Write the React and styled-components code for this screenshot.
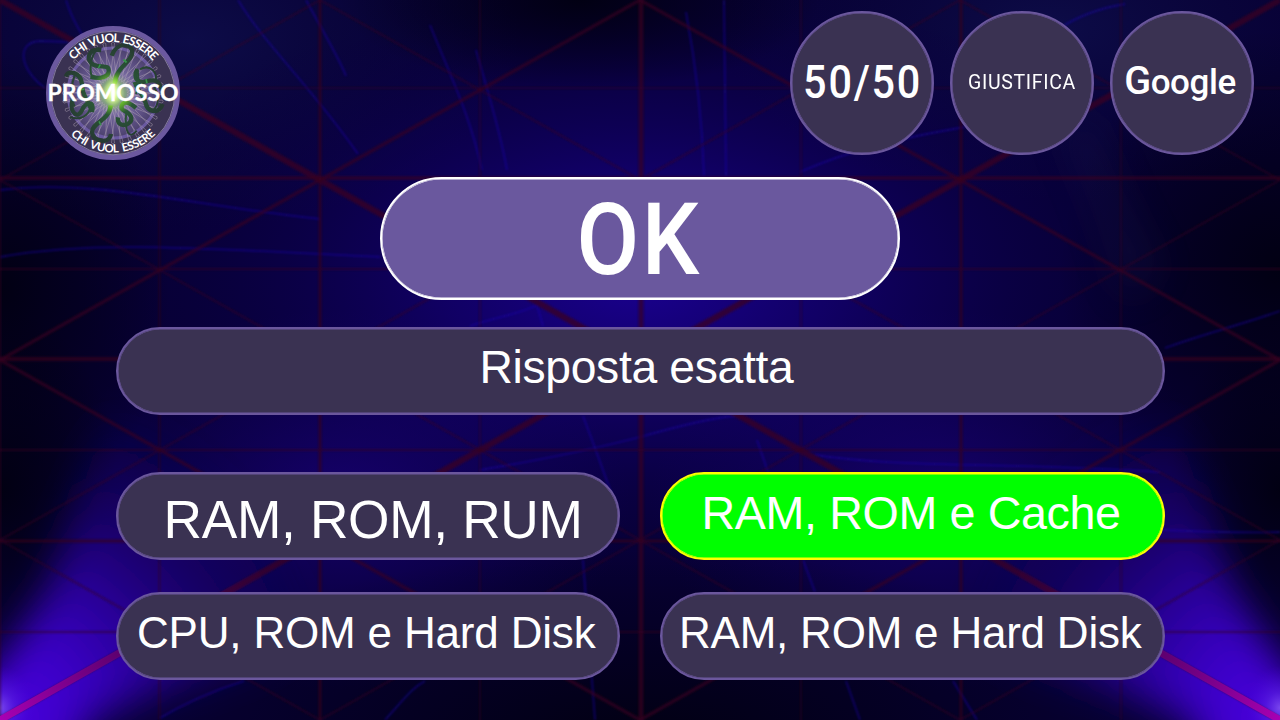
import React from "react";
import styled, { createGlobalStyle } from "styled-components";

const GlobalStyle = createGlobalStyle`
  * { box-sizing: border-box; }
  html, body { margin: 0; background: #03001c; }
  body { overflow: hidden; }
`;

const Stage = styled.main`
  position: relative;
  width: 1280px;
  height: 720px;
  overflow: hidden;
  font-family: "Liberation Sans", Arial, sans-serif;
  color: #fff;
`;

const Backdrop = styled.svg`
  position: absolute;
  inset: 0;
  display: block;
`;

const Screen = styled.div`
  position: relative;
  height: 100%;
  display: flex;
  flex-direction: column;
  align-items: center;
`;

const Header = styled.header`
  width: 100%;
  height: 176.5px;
  display: flex;
  justify-content: space-between;
  align-items: flex-start;
  padding: 10.5px 26px 0 45px;
`;

const Logo = styled.svg`
  display: block;
  margin-top: 14px;
`;

const Lifelines = styled.nav`
  display: flex;
  gap: 16px;
`;

const Lifeline = styled.button`
  width: 144px;
  height: 144px;
  padding: 0;
  border: 2px solid #6b579d;
  box-shadow: inset 0 0 0 0.5px #6b579d;
  border-radius: 50%;
  background: #3a3252;
  color: #fff;
  display: flex;
  align-items: center;
  justify-content: center;
`;

const LifelineLabel = styled.span`
  flex: none;
  font-family: Roboto, sans-serif;
  font-size: ${(p) => p.$size}px;
  font-weight: ${(p) => p.$weight || 400};
  letter-spacing: ${(p) => p.$spacing || 0}px;
  line-height: 1;
  white-space: nowrap;
  transform: translate(${(p) => p.$nudge || 0}px, ${(p) => p.$shift || 0}px) scaleX(${(p) => p.$stretch || 1});
`;

const Wordmark = styled(LifelineLabel)`
  &::first-letter { font-size: 39.5px; }
  display: block;
`;

const Confirm = styled.button`
  width: 520px;
  height: 123px;
  padding: 0;
  border: 2px solid #fff;
  box-shadow: inset 0 0 0 0.5px #fff;
  border-radius: 62px;
  background: #6a589e;
  color: #fff;
  display: flex;
  align-items: center;
  justify-content: center;
`;

const Pill = styled.div`
  width: ${(p) => p.$width}px;
  height: 88px;
  border: 2px solid ${(p) => (p.$correct ? "#ffff00" : "#6b579d")};
  box-shadow: inset 0 0 0 0.5px ${(p) => (p.$correct ? "#ffff00" : "#6b579d")};
  border-radius: 44px;
  background: ${(p) => (p.$correct ? "#00ff00" : "#3a3252")};
  padding: ${(p) => p.$top}px 0 0 ${(p) => p.$left}px;
  font-size: ${(p) => p.$size}px;
  letter-spacing: ${(p) => p.$spacing}px;
  line-height: 1;
  white-space: nowrap;
`;

const Message = styled(Pill)`
  margin-top: 27.5px;
`;

const Answers = styled.section`
  margin-top: 57px;
  display: grid;
  grid-template-columns: 504.5px 504.5px;
  gap: 32px 40px;
`;

const verticals = [
  [0, 2], [159.5, 1.5], [320, 3], [480, 1.5], [641, 5],
  [801, 1.5], [961, 3], [1121, 1.5],
];
const horizontals = [
  [88, 1.5], [178, 3.5], [269, 1.8], [359, 4], [450, 1.8], [541, 3], [632, 1.8],
];
const diagonals = [
  [0, 0, 1280, 720, 6], [1280, 0, 0, 720, 6],
  [640, 0, 0, 360, 3.4], [640, 0, 1280, 360, 3.4],
  [0, 360, 640, 720, 3.4], [1280, 360, 640, 720, 3.4],
  [320, 0, 0, 180, 1.8], [320, 0, 1280, 540, 1.8],
  [960, 0, 0, 540, 1.8], [960, 0, 1280, 180, 1.8],
  [0, 180, 960, 720, 1.8], [1280, 180, 320, 720, 1.8],
  [0, 540, 320, 720, 1.8], [1280, 540, 960, 720, 1.8],
];
const strands = [
  "M66 0 C72 20 82 35 95 55",
  "M45 88 C20 70 15 42 40 41 L70 42",
  "M238 0 C265 45 310 85 358 154",
  "M306 0 C325 35 340 60 346 76",
  "M430 25 C450 75 470 115 482 170",
  "M476 50 C490 100 500 130 507 170",
  "M0 190 C90 178 190 205 320 219",
  "M0 257 C90 240 200 248 380 257",
  "M686 12 C695 60 702 110 704 176",
  "M724 0 L726 176",
  "M800 172 C850 150 900 138 965 127",
  "M1060 28 C1080 15 1100 8 1125 4",
  "M470 326 C500 316 520 314 537 305 L543 326",
  "M1165 348 C1200 335 1240 325 1280 311",
  "M583 416 C596 450 605 475 617 510",
  "M480 470 C540 460 590 450 640 437 C675 427 710 418 735 416",
  "M757 440 L768 472",
  "M815 455 C900 468 1000 462 1160 472",
  "M1164 530 C1210 532 1240 533 1280 532",
  "M803 560 L815 592",
  "M160 718 C190 700 215 690 244 681",
  "M385 720 C405 698 412 688 425 681",
  "M846 681 L860 720",
  "M953 681 L977 720",
  "M583 560 L595 720",
];

const lineOpacity = (w) => (w > 5 ? 0.75 : w > 2 ? 0.66 : 0.56);

function Lights() {
  return (
    <Backdrop width="1280" height="720" viewBox="0 0 1280 720" aria-hidden="true">
      <defs>
        <radialGradient id="core">
          <stop offset="0" stopColor="#1a0090" />
          <stop offset=".35" stopColor="#130070" stopOpacity=".8" />
          <stop offset="1" stopColor="#08003c" stopOpacity="0" />
        </radialGradient>
        <radialGradient id="mist">
          <stop offset="0" stopColor="#0d0c48" />
          <stop offset="1" stopColor="#0a063c" stopOpacity="0" />
        </radialGradient>
        <radialGradient id="indigo">
          <stop offset="0" stopColor="#200092" stopOpacity=".9" />
          <stop offset="1" stopColor="#150070" stopOpacity="0" />
        </radialGradient>
        <radialGradient id="shade">
          <stop offset="0" stopColor="#01000f" stopOpacity=".9" />
          <stop offset="1" stopColor="#01000f" stopOpacity="0" />
        </radialGradient>
        <radialGradient id="beam" gradientUnits="userSpaceOnUse" cx="0" cy="720" r="360">
          <stop offset="0" stopColor="#4c04e0" />
          <stop offset=".22" stopColor="#3c00c8" />
          <stop offset=".42" stopColor="#2a009c" />
          <stop offset=".62" stopColor="#1e007a" stopOpacity=".75" />
          <stop offset=".92" stopColor="#140068" stopOpacity="0" />
        </radialGradient>
        <radialGradient id="spark">
          <stop offset="0" stopColor="#7a48ee" />
          <stop offset=".4" stopColor="#5a20e4" stopOpacity=".6" />
          <stop offset="1" stopColor="#4400d8" stopOpacity="0" />
        </radialGradient>
        <radialGradient id="hot" gradientUnits="userSpaceOnUse" cx="0" cy="720" r="330">
          <stop offset="0" stopColor="#a800b4" />
          <stop offset=".4" stopColor="#680078" stopOpacity=".85" />
          <stop offset="1" stopColor="#40003c" stopOpacity="0" />
        </radialGradient>
        <filter id="soft" x="-30%" y="-30%" width="160%" height="160%">
          <feGaussianBlur stdDeviation="19" />
        </filter>
        <filter id="haze" filterUnits="userSpaceOnUse" x="0" y="0" width="1280" height="720">
          <feGaussianBlur stdDeviation=".8" />
        </filter>
        <g id="corner">
          <polygon points="-50,780 -30,700 10,650 50,585 75,515 110,400 300,340 420,600 250,665 150,694 90,720 60,780" fill="url(#beam)" filter="url(#soft)" />
          <ellipse cx="0" cy="708" rx="36" ry="42" fill="url(#spark)" />
        </g>
        <path id="ray" d="M0 720 L320 540" stroke="url(#hot)" strokeWidth="7" />
      </defs>
      <rect width="1280" height="720" fill="#070034" />
      <ellipse cx="190" cy="40" rx="330" ry="190" fill="url(#mist)" />
      <ellipse cx="1050" cy="30" rx="330" ry="170" fill="url(#mist)" />
      <ellipse cx="640" cy="280" rx="560" ry="320" fill="url(#core)" />
      <ellipse cx="340" cy="500" rx="290" ry="190" fill="url(#indigo)" opacity=".65" />
      <ellipse cx="940" cy="500" rx="290" ry="190" fill="url(#indigo)" opacity=".65" />
      <ellipse cx="0" cy="290" rx="170" ry="240" fill="url(#shade)" />
      <ellipse cx="1280" cy="270" rx="220" ry="240" fill="url(#shade)" />
      <ellipse cx="0" cy="490" rx="120" ry="180" fill="url(#shade)" />
      <ellipse cx="1280" cy="490" rx="110" ry="170" fill="url(#shade)" />
      <ellipse cx="580" cy="0" rx="240" ry="90" fill="url(#shade)" />
      <ellipse cx="640" cy="740" rx="520" ry="190" fill="url(#shade)" />
      <use href="#corner" />
      <use href="#corner" transform="translate(1280 0) scale(-1 1)" />
      <path d="M1060 125 C1090 190 1110 240 1125 300 L1160 270 C1130 220 1105 160 1085 115Z" fill="#222058" opacity=".25" filter="url(#soft)" />
      <g fill="none" stroke="#1c08b4" strokeWidth="1.8" opacity=".45" filter="url(#haze)">
        {strands.map((d) => <path key={d} d={d} />)}
      </g>
      <g stroke="#380020" filter="url(#haze)">
        {verticals.map(([x, w]) => (
          <path key={x} d={`M${x} -4 V724`} strokeWidth={w} strokeOpacity={lineOpacity(w)} />
        ))}
        {horizontals.map(([y, w]) => (
          <path key={y} d={`M-4 ${y} H1284`} strokeWidth={w} strokeOpacity={lineOpacity(w)} />
        ))}
        {diagonals.map(([a, b, c, d, w]) => (
          <path key={`${a}-${b}-${c}-${d}`} d={`M${a} ${b} L${c} ${d}`} strokeWidth={w} strokeOpacity={lineOpacity(w)} />
        ))}
      </g>
      <use href="#ray" />
      <use href="#ray" transform="translate(1280 0) scale(-1 1)" />
    </Backdrop>
  );
}

const snakes = [
  "M245 137 C262 92 312 98 306 132 C300 158 258 172 254 222",
  "M214 120 C176 114 164 148 190 164 C214 175 238 160 236 186 C232 206 200 206 182 200",
  "M108 200 C112 178 152 186 156 222 C154 258 176 268 186 306",
  "M128 268 C116 312 146 328 156 300 C166 276 196 270 186 306",
  "M243 372 C238 404 188 396 186 366 C186 338 240 330 242 286",
  "M264 322 C258 356 304 348 304 326 C304 302 262 306 278 282 C288 272 306 284 318 294",
  "M398 282 C386 314 352 308 346 276 C336 246 322 244 314 216",
  "M322 178 C306 206 328 222 348 214 C382 206 386 214 394 238",
];
const bars = [
  "M206 112 C178 140 178 180 186 206",
  "M120 322 C150 330 175 322 184 286",
  "M320 362 C300 390 280 370 290 300",
  "M330 178 C360 160 385 190 376 214",
  "M322 176 C330 220 322 238 318 252",
  "M136 190 C124 220 120 260 134 290",
  "M370 300 C388 284 388 254 372 232",
];

function spirograph(inner, outer, teeth, twist) {
  let d = "";
  for (let i = 0; i < teeth; i += 1) {
    const a = (i / teeth) * Math.PI * 2;
    const half = Math.PI / teeth;
    const at = (r, t) => `${(68 + r * Math.cos(t)).toFixed(2)} ${(68 + r * Math.sin(t)).toFixed(2)}`;
    d += `M${at(inner, a + twist)} L${at(outer, a - 0.03)} Q${at(outer + 2, a)} ${at(outer, a + 0.03)} L${at(inner, a + half - twist)} `;
  }
  return d;
}

function Emblem() {
  return (
    <Logo width="136" height="136" viewBox="0 0 136 136">
      <defs>
        <radialGradient id="disc">
          <stop offset="0" stopColor="#ffffff" />
          <stop offset=".1" stopColor="#d8f59a" />
          <stop offset=".26" stopColor="#86a481" />
          <stop offset=".45" stopColor="#786ba0" />
          <stop offset=".8" stopColor="#5a4d80" />
          <stop offset="1" stopColor="#4a406c" />
        </radialGradient>
        <radialGradient id="serpent" gradientUnits="userSpaceOnUse" cx="249" cy="249" r="150">
          <stop offset="0" stopColor="#c8ff50" />
          <stop offset=".25" stopColor="#6cc02c" />
          <stop offset=".45" stopColor="#2a5636" />
          <stop offset="1" stopColor="#263a32" />
        </radialGradient>
        <radialGradient id="flare">
          <stop offset="0" stopColor="#fff" />
          <stop offset=".35" stopColor="#e6ffae" stopOpacity=".7" />
          <stop offset="1" stopColor="#a5ee3c" stopOpacity="0" />
        </radialGradient>
        <path id="topArc" d="M17 68 A51 51 0 0 1 119 68" />
        <path id="bottomArc" d="M8.5 68 A59.5 59.5 0 0 0 127.5 68" />
      </defs>
      <circle cx="68" cy="68" r="64.5" fill="#3a3252" stroke="#6b589f" strokeWidth="5" />
      <circle cx="68" cy="68" r="61.8" fill="none" stroke="#9389ac" strokeWidth=".8" />
      <circle cx="68" cy="68" r="45" fill="url(#disc)" stroke="#6a59a0" strokeWidth="3" />
      <path d={spirograph(14, 50, 36, 0.3)} fill="none" stroke="#b9adbc" strokeWidth=".6" opacity=".7" />
      <g transform="translate(68 68) scale(.33333) translate(-249 -249)" fill="none" stroke="url(#serpent)">
        {snakes.map((d) => <path key={d} d={d} strokeWidth="13" />)}
        {bars.map((d) => <path key={d} d={d} strokeWidth="6" />)}
        <g stroke="#38924a" strokeWidth="13">
          <path d="M283 155 L287 151" />
          <path d="M206 168 L210 170" />
          <path d="M156 236 L157 241" />
          <path d="M208 341 L212 339" />
          <path d="M340 253 L342 257" />
          <path d="M347 214 L352 213" />
        </g>
      </g>
      <ellipse cx="68" cy="67" rx="9" ry="18" fill="url(#flare)" />
      <g fill="#fff" fontFamily="Lato, sans-serif" fontWeight="700">
        <text fontSize="12" wordSpacing="2">
          <textPath href="#topArc" startOffset="35.5" textLength="90" lengthAdjust="spacing">CHI VUOL ESSERE</textPath>
        </text>
        <text fontSize="11.4" wordSpacing="2">
          <textPath href="#bottomArc" startOffset="46" textLength="95" lengthAdjust="spacing">CHI VUOL ESSERE</textPath>
        </text>
        <text x="2.5" y="76" fontSize="22.4" stroke="#fff" strokeWidth=".3" textLength="131" lengthAdjust="spacingAndGlyphs">PROMOSSO</text>
      </g>
    </Logo>
  );
}

const answers = [
  { text: "RAM, ROM, RUM", size: 53.33, top: 19, left: 46, spacing: -0.35 },
  { text: "RAM, ROM e Cache", size: 46.67, top: 16, left: 39.5, spacing: -0.38 },
  { text: "CPU, ROM e Hard Disk", size: 44, top: 17, left: 19.5, spacing: -0.18 },
  { text: "RAM, ROM e Hard Disk", size: 44, top: 17, left: 17, spacing: -0.22 },
];
const correctAnswer = "RAM, ROM e Cache";

export default function App() {
  return (
    <Stage>
      <GlobalStyle />
      <Lights />
      <Screen>
        <Header>
          <Emblem />
          <Lifelines>
            <Lifeline>
              <LifelineLabel $size={47} $weight={500} $stretch={0.88} $spacing={2} $nudge={1} $shift={-1.5}>50/50</LifelineLabel>
            </Lifeline>
            <Lifeline>
              <LifelineLabel $size={21} $weight={400} $stretch={0.93} $spacing={0.7} $shift={0}>GIUSTIFICA</LifelineLabel>
            </Lifeline>
            <Lifeline>
              <Wordmark $size={35} $weight={500} $spacing={-0.4} $nudge={-2} $shift={-2}>Google</Wordmark>
            </Lifeline>
          </Lifelines>
        </Header>
        <Confirm>
          <LifelineLabel $size={101} $weight={500} $stretch={0.9} $spacing={3} $nudge={-0.5} $shift={1}>OK</LifelineLabel>
        </Confirm>
        <Message $width={1049} $size={46.3} $top={15} $left={362} $spacing={-0.35}>Risposta esatta</Message>
        <Answers>
          {answers.map((a) => (
            <Pill key={a.text} $width={504.5} $size={a.size} $top={a.top} $left={a.left} $spacing={a.spacing} $correct={a.text === correctAnswer}>{a.text}</Pill>
          ))}
        </Answers>
      </Screen>
    </Stage>
  );
}
